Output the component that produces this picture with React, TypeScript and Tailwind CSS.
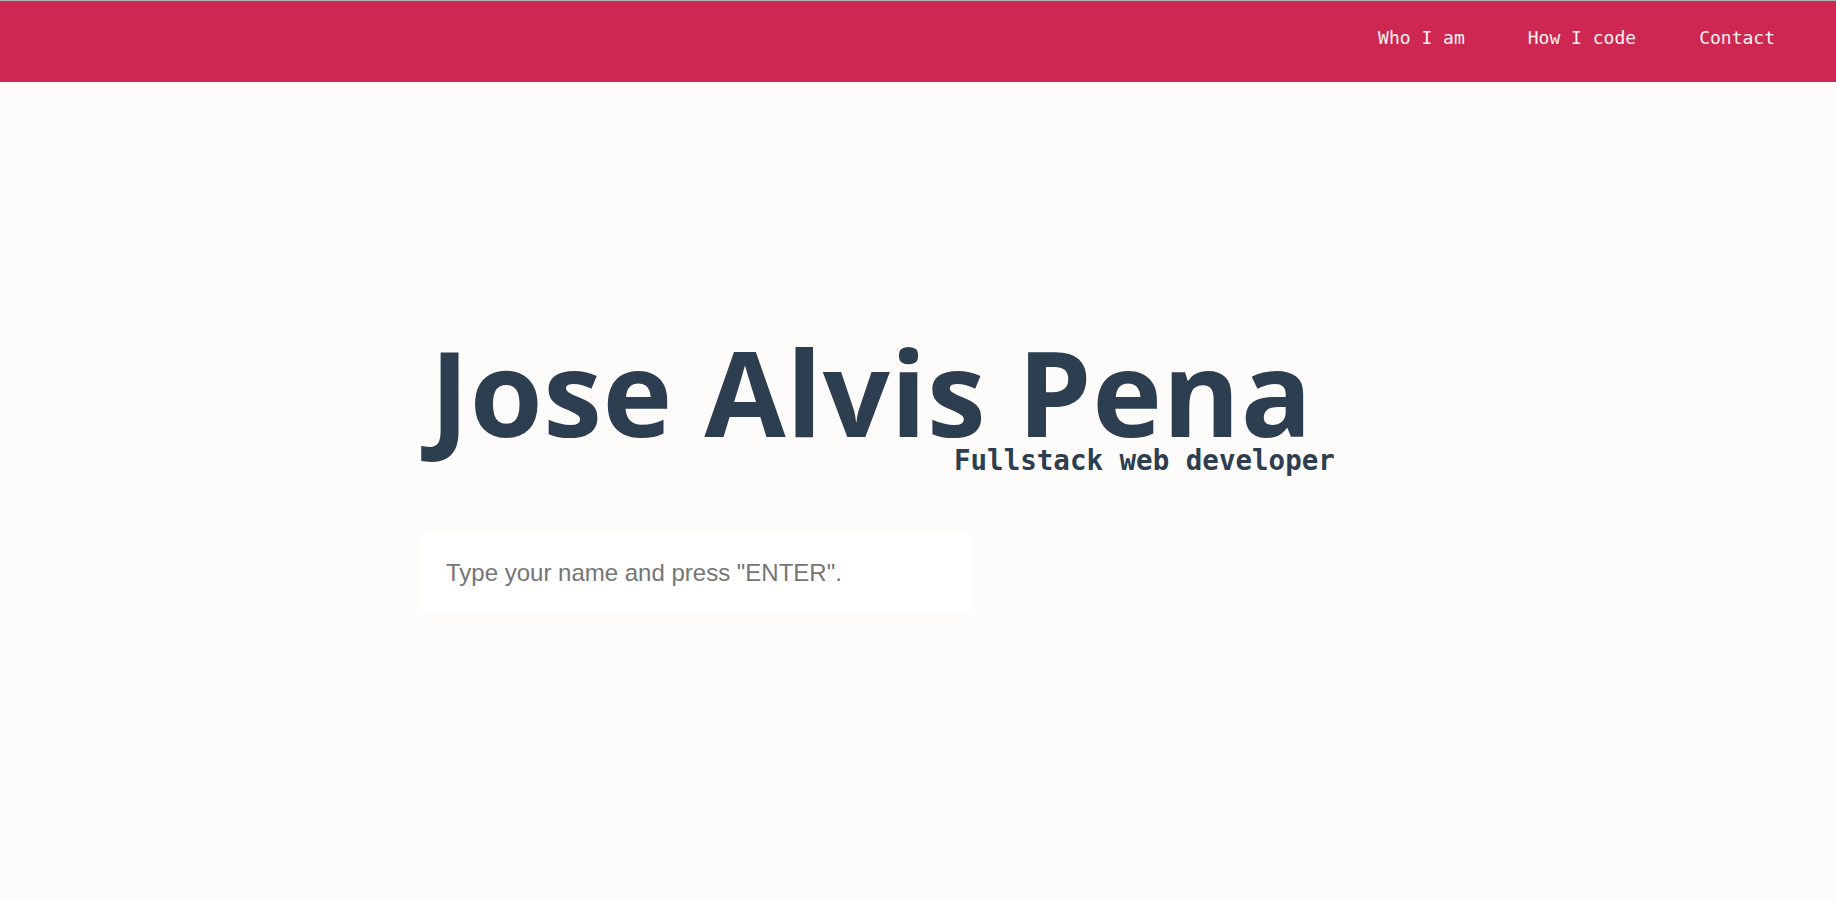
import { useState } from "react";

export default function App() {
  const [name, setName] = useState("");

  return (
    <div className="min-h-screen bg-[#fdfcfb]">
      {/* Top nav */}
      <header className="h-[82px] border-t border-[#b5b5b5] bg-[#ce2852]">
        <nav className="flex h-full items-center justify-end gap-[63px] pr-[61px] pb-[8px] font-['DejaVu_Sans_Mono',monospace] text-[18px] text-[#fdf1f3]">
          <a href="#who">Who I am</a>
          <a href="#how">How I code</a>
          <a href="#contact">Contact</a>
        </nav>
      </header>

      {/* Hero */}
      <main className="pl-[421px] pt-[262px]">
        <div className="flex flex-col items-start">
          <h1 className="ml-[9px] font-['Open_Sans',sans-serif] text-[118px] font-bold leading-[96px] tracking-[0.6px] text-[#2c3e50]">
            Jose Alvis Pena
          </h1>
          <p className="mt-[7px] ml-[533px] font-['DejaVu_Sans_Mono',monospace] text-[27.5px] font-bold leading-none text-[#2c3e50]">
            Fullstack web developer
          </p>
        </div>

        <form
          className="mt-[58px]"
          onSubmit={(e) => {
            e.preventDefault();
          }}
        >
          <input
            value={name}
            onChange={(e) => setName(e.target.value)}
            placeholder='Type your name and press "ENTER".'
            className="h-[81px] w-[550px] bg-white px-[25px] font-['Liberation_Sans',Arial,sans-serif] text-[24px] text-[#2c3e50] outline-none placeholder:text-[#757575]"
          />
        </form>
      </main>
    </div>
  );
}
